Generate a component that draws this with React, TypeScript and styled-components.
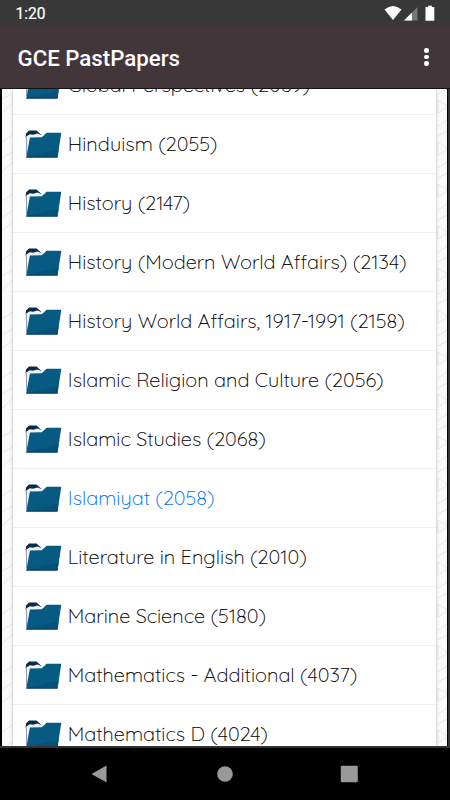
import React from 'react';
import styled, { createGlobalStyle } from 'styled-components';

const GlobalStyle = createGlobalStyle`
  * { box-sizing: border-box; }
  html, body { margin: 0; padding: 0; background: #000; overflow: hidden; }
`;

const Screen = styled.div`
  width: 450px;
  height: 800px;
  display: flex;
  flex-direction: column;
  overflow: hidden;
  background: #000;
`;

const StatusBar = styled.div`
  height: 26px;
  flex: none;
  display: flex;
  align-items: center;
  justify-content: space-between;
  padding: 2px 15px 0 15.5px;
  background: #393838;
  color: #fff;
  font: 400 15.6px/24px Roboto, sans-serif;
  -webkit-text-stroke: 0.2px #fff;
`;

const StatusIcons = styled.svg`
  width: 52px;
  height: 18px;
  margin-top: -2px;
`;

const AppBar = styled.header`
  height: 63px;
  flex: none;
  display: flex;
  align-items: center;
  justify-content: space-between;
  padding: 0 21.5px 0 17.5px;
  background: #43363a;
  border-bottom: 1px solid #161214;
`;

const Title = styled.h1`
  margin: 1px 0 0;
  color: #fff;
  font: 500 22.25px/30px Roboto, sans-serif;
`;

const MenuButton = styled.button`
  display: flex;
  flex-direction: column;
  gap: 2px;
  padding: 0;
  border: 0;
  background: none;
`;

const Dot = styled.span`
  width: 4.6px;
  height: 4.6px;
  border-radius: 50%;
  background: #fff;
`;

const Viewport = styled.main`
  height: 657px;
  flex: none;
  display: flex;
  border-left: 2px solid #000;
  overflow: hidden;
  background: #fff;
`;

const Margin = styled.svg`
  width: 11px;
  height: 657px;
  flex: none;
  background: #fafafa;
`;

const RightFrame = styled.div`
  width: 3px;
  flex: none;
  background: #333;
  border-left: 1px solid #000;
`;

const List = styled.ul`
  position: relative;
  width: 423px;
  flex: none;
  margin: 0;
  padding: 0;
  list-style: none;
  background: #fff;
  box-shadow: 0 0 3px rgba(0, 0, 0, 0.28);
`;

const Row = styled.li<{ $active?: boolean }>`
  height: 59.06px;
  display: flex;
  align-items: center;
  gap: 6px;
  padding: 0 0 0 11.8px;
  border-bottom: 1px dotted #e4e4e4;
  color: ${(p) => (p.$active ? '#0070f5' : '#000')};

  &:first-child { margin-top: -33.4px; }
`;

const FolderSvg = styled.svg`
  width: 37px;
  height: 30px;
  flex: none;
`;

const Label = styled.span`
  font: 300 19.98px/28px Quicksand, Lato, sans-serif;
  -webkit-text-stroke: 0.1px currentColor;
  white-space: nowrap;
`;

const BottomEdge = styled.div`
  height: 2px;
  flex: none;
  background: #343233;
`;

const NavBar = styled.nav`
  flex: 1;
  display: flex;
  align-items: flex-start;
  justify-content: center;
  padding-top: 16px;
  gap: 100px;
`;

const NavIcon = styled.svg`
  width: 24px;
  height: 20px;
  flex: none;
  fill: #999;
`;

const Folder = () => (
  <FolderSvg viewBox="0 0 37 30">
    <path d="M0.6 8 1 4.5 4 1.5H11.5L16.5 6 14 8.5 4 8.5 1.5 10Z" fill="#082b47" />
    <path d="M1 7.8 4.8 5.2 8 5.8 12.5 4.6 17.5 6.6 15 9 5 10 2 27.5Z" fill="#f1f3f6" />
    <path d="M1.3 8 1.7 26" stroke="#8090a4" strokeWidth="0.9" />
    <path d="M4.9 8.6 16.5 8.2 18.5 6.8 21.6 3.8H36.3L32.5 28.5H1.2Z" fill="#075b82" />
    <path d="M12 25.5 33.6 20.5 32.6 28H2Z" fill="#065277" />
    <path d="M1.2 28.3H32.6" stroke="#042c61" strokeWidth="0.7" />
  </FolderSvg>
);

type Subject = { name: string; active?: boolean };

const subjects: Subject[] = [
  { name: 'Global Perspectives (2069)' },
  { name: 'Hinduism (2055)' },
  { name: 'History (2147)' },
  { name: 'History (Modern World Affairs) (2134)' },
  { name: 'History World Affairs, 1917-1991 (2158)' },
  { name: 'Islamic Religion and Culture (2056)' },
  { name: 'Islamic Studies (2068)' },
  { name: 'Islamiyat (2058)', active: true },
  { name: 'Literature in English (2010)' },
  { name: 'Marine Science (5180)' },
  { name: 'Mathematics - Additional (4037)' },
  { name: 'Mathematics D (4024)' },
];

export default function App() {
  return (
    <Screen>
      <GlobalStyle />
      <StatusBar>
        <span>1:20</span>
        <StatusIcons viewBox="0 0 52 18">
          <path d="M1.5 5.5Q10 -1.5 18.5 5.5L10 16Z" fill="#fff" />
          <path d="M34.5 3V16.5H21Z" fill="#777" />
          <path d="M29 8.5V16.5H21Z" fill="#fff" />
          <path d="M42.5 3H45V1.7H49V3H51.3V16.8H42.5Z" fill="#fff" />
        </StatusIcons>
      </StatusBar>
      <AppBar>
        <Title>GCE PastPapers</Title>
        <MenuButton aria-label="More options"><Dot /><Dot /><Dot /></MenuButton>
      </AppBar>
      <Viewport>
        <Margin viewBox="0 0 11 657">
          <defs>
            <pattern id="left" width="11" height="59" patternUnits="userSpaceOnUse">
              <path d="M0 10 11 4M0 24 11 14M0 53 11 46" stroke="#e8e8e8" fill="none" />
            </pattern>
          </defs>
          <rect width="11" height="657" fill="url(#left)" />
        </Margin>
        <List>
          {subjects.map((s) => (
            <Row key={s.name} $active={s.active}>
              <Folder />
              <Label>{s.name}</Label>
            </Row>
          ))}
        </List>
        <Margin viewBox="0 0 11 657">
          <defs>
            <pattern id="right" width="11" height="42" patternUnits="userSpaceOnUse">
              <path d="M2 11 11 17M2 24 11 18M2 5 11 0M2 11V24M2 37 11 31" stroke="#e6e6e6" fill="none" />
            </pattern>
          </defs>
          <rect width="11" height="657" fill="url(#right)" />
        </Margin>
        <RightFrame />
      </Viewport>
      <BottomEdge />
      <NavBar>
        <NavIcon viewBox="0 0 24 20"><path d="M17.5 1.5V18.5L2.5 10Z" /></NavIcon>
        <NavIcon viewBox="0 0 24 20"><circle cx="12" cy="10" r="7.8" /></NavIcon>
        <NavIcon viewBox="0 0 24 20"><rect x="3.8" y="1.8" width="17" height="16.5" rx="1" /></NavIcon>
      </NavBar>
    </Screen>
  );
}
